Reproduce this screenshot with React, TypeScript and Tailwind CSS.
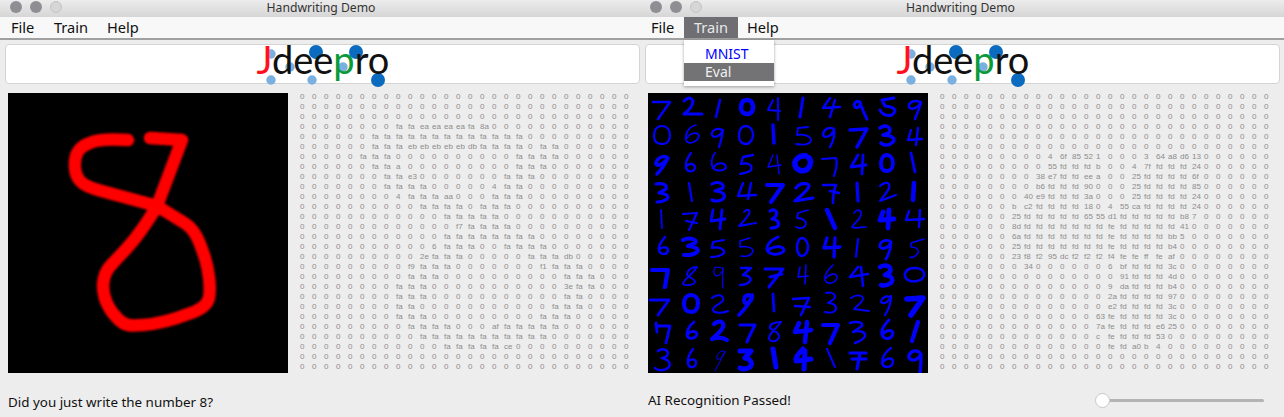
import React from 'react';

type SparseRow = [number, string];

const COLS = 28;
const ROWS = 28;

const leftData: Record<number, SparseRow> = {
  3: [8, 'fa fa ea ea ea ea fa 8a'],
  4: [6, 'fa fa fa fa fa fa fa fa fa fa fa fa fa'],
  5: [6, 'fa fa fa eb eb eb eb eb db fa fa fa fa 0 fa fa'],
  6: [5, 'fa fa fa 0 0 0 0 0 0 0 0 0 0 fa fa fa fa'],
  7: [6, 'fa fa a 0 0 0 0 0 0 0 0 0 fa fa fa'],
  8: [7, 'fa fa e3 0 0 0 0 0 0 0 fa fa fa'],
  9: [7, 'fa fa fa fa 0 0 0 0 0 4 fa fa'],
  10: [8, '4 fa fa fa aa 0 0 0 fa fa fa'],
  11: [10, 'fa fa fa fa 0 fa fa fa'],
  12: [12, 'fa fa fa fa fa'],
  13: [13, 'f7 fa fa fa fa'],
  14: [12, 'fa fa fa fa fa fa fa fa'],
  15: [11, '6 fa fa fa 0 0 fa fa fa fa'],
  16: [10, '2e fa fa fa 0 0 0 0 0 fa fa fa db'],
  17: [9, 'f9 fa fa fa 0 0 0 0 0 0 0 f1 fa fa fa'],
  18: [9, 'fa fa fa 0 0 0 0 0 0 0 0 0 0 fa fa fa'],
  19: [8, 'fa fa fa 0 0 0 0 0 0 0 0 0 0 0 3e fa fa'],
  20: [8, 'fa fa fa 0 0 0 0 0 0 0 0 0 0 0 fa fa'],
  21: [8, 'fa fa 0 0 0 0 0 0 0 0 0 0 0 fa fa fa'],
  22: [8, 'fa fa fa 0 0 0 0 0 0 0 0 0 fa fa fa'],
  23: [9, 'fa fa fa fa 0 0 0 af fa fa fa fa fa'],
  24: [10, 'fa fa fa fa fa fa fa fa fa fa fa'],
  25: [12, 'fa fa fa fa fa ce'],
};

const rightData: Record<number, SparseRow> = {
  6: [9, '4 6f 85 52 1 0 0 0 3 64 a8 d6 13'],
  7: [9, '55 fd fd fd b 0 0 4 7f fd fd fd 24'],
  8: [8, '38 e7 fd fd ee a 0 0 25 fd fd fd fd 6f'],
  9: [8, 'b6 fd fd fd 90 0 0 0 25 fd fd fd fd 85'],
  10: [7, '40 e9 fd fd fd 3a 0 0 0 25 fd fd fd fd 24'],
  11: [6, 'b c2 fd fd fd fd 18 0 4 55 ca fd fd fd fd 24'],
  12: [6, '25 fd fd fd fd fd 65 55 d1 fd fd fd fd fd b8 7'],
  13: [6, '8d fd fd fd fd fd fd fd fe fd fd fd fd fd 41'],
  14: [6, '6a fd fd fd fd fd fd fd fe fd fd fd fd bb 5'],
  15: [6, '25 fd fd fd fd fd fd fd fe fd fd fd fd b4'],
  16: [6, '23 f8 f2 95 dc f2 f2 f2 f4 fe fe ff fe af'],
  17: [7, '34 0 0 0 0 0 0 6 bf fd fd fd 3c'],
  18: [15, '91 fd fd fd 4d'],
  19: [14, '9 da fd fd fd b4'],
  20: [14, '2a fd fd fd fd 97'],
  21: [14, 'e2 fd fd fd fd 3c'],
  22: [13, '63 fe fd fd fd fd 3c'],
  23: [13, '7a fe fd fd fd e6 25'],
  24: [13, 'c fe fd fd fd 53'],
  25: [14, 'fe fd a0 b 4'],
};

const expandRow = (row?: SparseRow) => {
  const cells: string[] = Array(COLS).fill('0');
  if (row) {
    row[1].split(' ').forEach((v, i) => {
      cells[row[0] + i] = v;
    });
  }
  return cells;
};

const Matrix = ({ data }: { data: Record<number, SparseRow> }) => (
  <div className="ml-3 -mt-px grid h-[280px] grid-cols-[repeat(28,12px)] grid-rows-[repeat(28,10px)] font-['Liberation_Sans',sans-serif] text-[8px] leading-[10px] text-[#8c8c8c]">
    {Array.from({ length: ROWS }).flatMap((_, r) =>
      expandRow(data[r]).map((v, c) => <span key={`${r}-${c}`}>{v}</span>),
    )}
  </div>
);

// one handwritten stroke set per 28x28 MNIST cell: [path, stroke width]
const mnist: [string, number][][] = [
  [
    ['M5 9L22 9L10 26', 2.5],
    ['M8 8Q14 2 17 8Q17 14 8 21L26 21', 3],
    ['M16 7L12 24', 2.5],
    ['M15 7C10 7 9 11 9 15C9 19 12 21 15 21C19 21 21 18 21 14C21 10 19 7 15 7Z', 4.5],
    ['M13 7L8 17L20 18M18 5L18 27', 2],
    ['M15 5L12 24', 3],
    ['M14 5L7 15L24 14M19 7L14 24', 2.5],
    ['M16 9C12 7 9 11 11 14C14 16 17 13 16 9C17 14 20 20 23 26', 3],
    ['M22 5L10 7L13 13C22 14 26 17 20 22C14 24 9 20 8 17', 3],
    ['M20 9C14 6 8 10 9 14C12 18 19 14 21 9C20 15 17 20 15 26', 2.5],
  ],
  [
    ['M14 5C8 5 6 10 6 15C6 20 9 23 14 23C20 23 22 18 22 14C22 9 19 5 14 5Z', 2.2],
    ['M20 4C12 6 9 13 10 19C12 24 21 22 23 15C22 11 15 11 11 17', 1.7],
    ['M18 9C13 6 7 10 8 14C10 18 17 15 19 9C18 15 17 21 15 26', 2.2],
    ['M14 5C9 5 7 10 7 15C7 20 10 23 14 23C18 23 21 18 21 14C21 9 18 5 14 5Z', 2.4],
    ['M13 4L14 22', 3.5],
    ['M20 6L10 7L9 14C16 13 23 15 23 19C22 24 14 24 8 23', 1.8],
    ['M18 8C13 5 7 9 7 14C9 18 16 15 18 9C19 15 17 21 14 26', 2.4],
    ['M6 9L23 8L13 26', 3.5],
    ['M8 7C14 3 20 6 17 12L11 14C20 14 24 18 21 21C17 25 12 25 9 22', 3.5],
    ['M11 9L8 19L22 18M18 7L16 24', 2.3],
  ],
  [
    ['M19 8C14 6 8 10 8 15C10 18 17 14 20 9C17 15 14 20 9 25', 3.5],
    ['M15 4C11 9 9 14 10 19C12 24 19 23 19 18C18 14 13 14 11 17', 2.2],
    ['M11 4C7 9 7 15 9 19C12 23 21 22 22 18C21 13 13 13 10 18', 2],
    ['M21 6L11 8L9 15C16 13 21 16 19 21C16 24 12 24 8 25', 2.3],
    ['M13 6L8 18L21 16M17 6L19 25', 1.4],
    ['M18 7C11 6 6 11 7 16C8 21 14 23 18 21C22 19 24 12 21 9', 5.5],
    ['M6 10L20 9C22 14 20 21 18 27', 2.2],
    ['M14 6L7 18L22 16M19 6L18 25', 2.8],
    ['M15 6C10 6 9 12 9 15C9 20 11 22 15 22C19 22 21 18 21 14C21 9 18 6 15 6Z', 3.8],
    ['M11 4L15 23', 2.8],
  ],
  [
    ['M8 7C13 6 20 7 18 12L11 16C17 16 22 19 19 22C15 25 11 25 9 25', 3.2],
    ['M13 6L16 24', 2.2],
    ['M8 7C13 4 21 6 19 11L11 14C18 14 23 18 19 22C15 25 10 24 8 23', 3.2],
    ['M11 6L6 19L24 18M19 6L16 22', 2.4],
    ['M7 8L23 8L11 25', 4],
    ['M8 11C11 6 21 5 21 9C20 14 11 20 7 24C13 23 19 22 25 21', 3.2],
    ['M7 8L20 8C18 13 17 19 17 26M14 14L23 16', 2.6],
    ['M13 6L14 24', 3.2],
    ['M8 9C12 5 19 4 17 11C15 16 10 21 8 24L24 18', 2.2],
    ['M14 6L13 23', 4.5],
  ],
  [
    ['M13 5L14 23', 1.8],
    ['M7 9L21 8L13 25M10 16L21 18', 2.2],
    ['M9 5L7 16L21 14M18 5L16 24', 2.8],
    ['M12 7C15 3 19 5 17 9C14 14 10 18 7 21C13 20 18 19 24 18', 2],
    ['M10 6C15 3 19 7 15 12L12 14C17 14 20 18 18 21C16 23 14 23 11 23', 3.2],
    ['M20 5L10 8L9 13C15 13 20 17 17 21C14 24 10 23 8 22', 1.8],
    ['M11 5L19 23', 4.5],
    ['M10 8C14 2 19 6 16 12C14 16 9 20 8 22C12 24 17 22 22 22', 1.7],
    ['M11 7L8 15L22 14M17 5L16 23', 4.8],
    ['M9 6L6 15L24 14M20 5L19 22', 2.4],
  ],
  [
    ['M17 4C12 10 10 15 11 18C13 22 20 22 20 17C19 13 13 14 11 17', 2.5],
    ['M7 7C13 4 22 6 19 10L12 13C18 13 24 16 21 19C17 23 12 22 8 22', 4],
    ['M20 7L9 9L8 15C14 13 21 16 20 20C16 24 11 24 7 24', 2.2],
    ['M18 5L8 8L8 14C13 13 21 14 21 18C20 23 14 24 9 23', 1.5],
    ['M18 4C11 7 6 12 7 17C9 22 19 23 24 18C24 13 16 12 8 17', 2.8],
    ['M14 5C11 5 9 10 9 14C9 19 11 23 14 23C17 23 20 19 20 14C20 9 17 5 14 5Z', 2.6],
    ['M11 5L8 15L24 14M19 5L18 24', 3.3],
    ['M14 6L12 24', 2.2],
    ['M18 8C13 6 7 9 8 14C10 17 17 15 19 9C19 15 17 21 14 26', 2.8],
    ['M24 6L11 10L11 14C16 14 19 16 18 20C15 24 12 25 10 24', 1.4],
  ],
  [
    ['M4 9L20 9C19 14 18 20 17 26', 4.2],
    ['M21 6C16 6 11 9 11 14C13 17 19 17 19 21C18 24 10 25 7 23C7 19 16 14 21 6Z', 1.8],
    ['M12 6C9 8 9 12 12 15C15 15 19 12 19 7C19 13 18 20 19 27M12 6L19 7', 1.2],
    ['M9 7L19 7L11 14C16 14 20 17 18 20C15 24 11 24 8 24', 2.4],
    ['M5 8L23 8L9 26M10 16L22 13', 3],
    ['M12 6L10 16L20 15M18 4L17 23', 1.6],
    ['M17 4C11 10 8 14 9 19C11 24 20 23 21 16C20 11 13 13 10 17', 1.6],
    ['M14 6L6 16L24 13M17 6L19 25', 2.6],
    ['M8 6C14 3 20 5 18 11L13 14C19 14 22 18 19 22C16 24 12 25 9 24', 4.5],
    ['M14 7C8 7 4 11 5 15C6 20 12 21 17 20C23 19 26 14 23 10C21 7 17 7 14 7Z', 2.4],
  ],
  [
    ['M2 11L21 11L10 26', 2.8],
    ['M15 6C10 6 8 11 8 15C8 20 11 23 15 23C20 23 22 19 22 14C22 9 19 6 15 6Z', 4.2],
    ['M8 9C12 5 20 5 19 11C18 15 8 17 9 21C10 25 20 24 24 22', 2],
    ['M17 6C12 6 11 11 13 14C16 15 21 11 20 6C19 12 13 20 7 26', 3.8],
    ['M13 5L14 22', 2.8],
    ['M5 10L21 9L13 26M7 17L22 18', 2.6],
    ['M10 4C16 2 21 6 18 10L12 14C18 14 22 18 19 22C16 24 12 24 9 23', 2],
    ['M7 9C12 5 18 6 19 9C19 14 12 17 10 20L25 22', 1.8],
    ['M18 8C13 6 9 10 9 13C12 16 17 13 19 7C19 14 17 20 13 26', 2.2],
    ['M7 10L23 9L11 26', 5.5],
  ],
  [
    ['M8 6L9 15M8 9L22 9L18 26', 2.8],
    ['M18 5C13 9 11 14 11 18C12 23 20 22 21 17C20 13 14 14 12 17', 2.8],
    ['M10 7C14 3 21 4 19 10C17 15 12 18 8 22C13 20 18 20 23 23', 4.2],
    ['M8 8L23 8C20 14 17 19 15 25', 3],
    ['M21 5C15 5 9 7 10 11C13 14 20 15 19 20C17 26 9 25 9 21C9 16 16 12 21 5', 2],
    ['M11 6L7 15L23 13M19 5L17 25', 4.5],
    ['M7 8L22 8L14 26', 4.2],
    ['M6 6C12 4 20 5 18 9L9 15C15 13 22 15 21 19C19 23 14 25 11 26', 2.4],
    ['M17 3C12 8 9 14 10 18C12 23 20 23 21 16C20 12 14 13 11 17', 3],
    ['M18 5L12 24', 4.2],
  ],
  [
    ['M10 6C16 2 22 6 19 11L14 13C20 14 24 19 20 23C16 26 10 26 7 23', 2.4],
    ['M17 4C13 9 11 14 12 19C14 24 20 23 20 17C19 13 14 14 12 17', 2.4],
    ['M20 6C16 5 12 10 13 14C16 15 20 11 21 6C18 13 14 20 11 26', 1],
    ['M8 6L19 6L13 13C19 14 21 19 18 22C15 24 12 25 8 23', 5],
    ['M13 4L16 22', 5],
    ['M15 4C10 9 7 13 8 16L23 14M17 6L16 24', 5],
    ['M11 4L19 22', 2],
    ['M6 8L22 8M16 8L13 24M8 14L22 14', 3.2],
    ['M19 3C13 7 10 13 10 18C12 24 21 23 21 16C20 12 14 13 11 17', 2.4],
    ['M19 7C14 4 8 8 9 13C12 17 19 15 21 9C21 16 21 22 20 27', 3.3],
  ],
];

const MnistGrid = () => (
  <svg viewBox="0 0 280 280" className="block h-[280px] w-[280px] bg-black">
    {mnist.map((row, r) =>
      row.map(([d, sw], c) => (
        <path
          key={`${r}-${c}`}
          transform={`translate(${c * 28} ${r * 28})`}
          d={d}
          fill="none"
          stroke="#0000ff"
          strokeWidth={sw}
          strokeLinecap="round"
          strokeLinejoin="round"
        />
      )),
    )}
  </svg>
);

const DrawnEight = () => (
  <svg viewBox="0 0 280 280" className="block h-[280px] w-[280px] bg-black">
    <defs>
      <filter id="soft">
        <feGaussianBlur stdDeviation="1.1" />
      </filter>
    </defs>
    <path
      d="M120 47C105 46 90 46 82 50C70 54 66 62 67 75C68 88 76 93 90 97L149 113L178 131C188 138 192 150 197 165C201 178 203 195 201 205C199 213 190 218 180 221C165 227 148 231 135 232C122 233 117 233 110 226C100 216 95 205 95 192C96 180 100 175 106 169C118 156 130 145 149 113L174 47L142 45"
      fill="none"
      stroke="#ff0000"
      strokeWidth="12.5"
      strokeLinecap="round"
      strokeLinejoin="round"
      filter="url(#soft)"
    />
  </svg>
);

const Logo = () => (
  <div className="relative h-full w-[132px]">
    <svg viewBox="0 0 132 40" className="absolute left-0 top-0 h-10 w-[132px] overflow-visible">
      <circle cx="14" cy="9" r="4.7" fill="#7ab0e0" />
      <circle cx="33" cy="22" r="4.7" fill="#7ab0e0" />
      <circle cx="86" cy="22" r="4.7" fill="#7ab0e0" />
      <circle cx="14" cy="35" r="4.7" fill="#7ab0e0" />
      <circle cx="55" cy="35" r="4.7" fill="#7ab0e0" />
      <circle cx="59" cy="7" r="7" fill="#0b6cbf" />
      <circle cx="99" cy="7" r="7" fill="#0b6cbf" />
      <circle cx="121" cy="35" r="7" fill="#0b6cbf" />
    </svg>
    <div className="relative text-center font-['Lato',sans-serif] text-[38px] leading-[29px] text-[#111111]">
      <span className="text-[#ff1020]">J</span>dee<span className="text-[#0a9a3a]">p</span>ro
    </div>
  </div>
);

const TitleBar = ({ right }: { right?: boolean }) => (
  <div className="relative flex h-[17px] items-center justify-center bg-gradient-to-b from-[#ececec] to-[#d6d6d6]">
    <div className="absolute left-[10px] top-[1px] flex gap-2">
      <span className="h-3 w-3 rounded-full bg-[#8f8e93]" />
      <span className="h-3 w-3 rounded-full bg-[#8f8e93]" />
      <span className="h-3 w-3 rounded-full border border-[#c4c4c4] bg-[#d6d6d6]" />
    </div>
    <span className={right ? "mr-[3px] font-['Noto_Sans',sans-serif] text-[12.2px] leading-none text-[#333333]" : "ml-[2px] font-['Noto_Sans',sans-serif] text-[12.2px] leading-none text-[#333333]"}>
      Handwriting Demo
    </span>
  </div>
);

const MenuBar = ({ open }: { open?: boolean }) => (
  <div className="relative flex h-[23px] items-center border-b-2 border-[#a0a0a0] bg-[#f8f8f8] font-['Noto_Sans',sans-serif] text-[14.6px] text-[#111111]">
    <span className="w-11 pl-[11px]">File</span>
    <span className={open ? 'flex h-[21px] w-[54px] items-center justify-center bg-[#6e6e73] text-[#e8e8e8]' : 'flex h-[21px] w-[54px] items-center justify-center'}>Train</span>
    <span className="px-[9px]">Help</span>
    {open && (
      <div className="absolute left-11 top-[23px] z-10 h-[46px] w-[90px] bg-white pt-[4px] text-[14px] shadow-[0_1px_3px_rgba(0,0,0,0.35)]">
        <div className="h-[19px] pl-[21px] leading-[19px] text-[#0000ff]">MNIST</div>
        <div className="h-[18px] bg-[#737375] pl-[21px] leading-[18px] text-[#f0f0f0]">Eval</div>
      </div>
    )}
  </div>
);

const LogoPanel = () => (
  <div className="ml-[5px] mt-1 flex h-10 w-[635px] justify-center rounded border border-[#d4d4d4] bg-white">
    <Logo />
  </div>
);

const Slider = () => (
  <div className="mr-5 flex w-[169px] items-center">
    <span className="z-10 h-[15px] w-[15px] shrink-0 rounded-full border border-[#c8c8c8] bg-white" />
    <span className="-ml-px h-[3px] flex-1 rounded bg-[#b4b4b4]" />
  </div>
);

export default function App() {
  return (
    <div className="flex h-[417px] w-[1284px] overflow-hidden bg-[#ededed]">
      <div className="flex w-[640px] flex-col">
        <TitleBar />
        <MenuBar />
        <LogoPanel />
        <div className="ml-2 mt-[9px] flex">
          <DrawnEight />
          <Matrix data={leftData} />
        </div>
        <div className="ml-2 mt-[19px] flex h-5 items-center font-['Noto_Sans',sans-serif] text-[13.4px] text-[#111111]">
          Did you just write the number 8?
        </div>
      </div>
      <div className="flex w-[644px] flex-col">
        <TitleBar right />
        <MenuBar open />
        <LogoPanel />
        <div className="ml-2 mt-[9px] flex">
          <MnistGrid />
          <Matrix data={rightData} />
        </div>
        <div className="ml-2 mt-[17px] flex h-5 items-center justify-between font-['Noto_Sans',sans-serif] text-[13.4px] text-[#111111]">
          <span>AI Recognition Passed!</span>
          <Slider />
        </div>
      </div>
    </div>
  );
}
